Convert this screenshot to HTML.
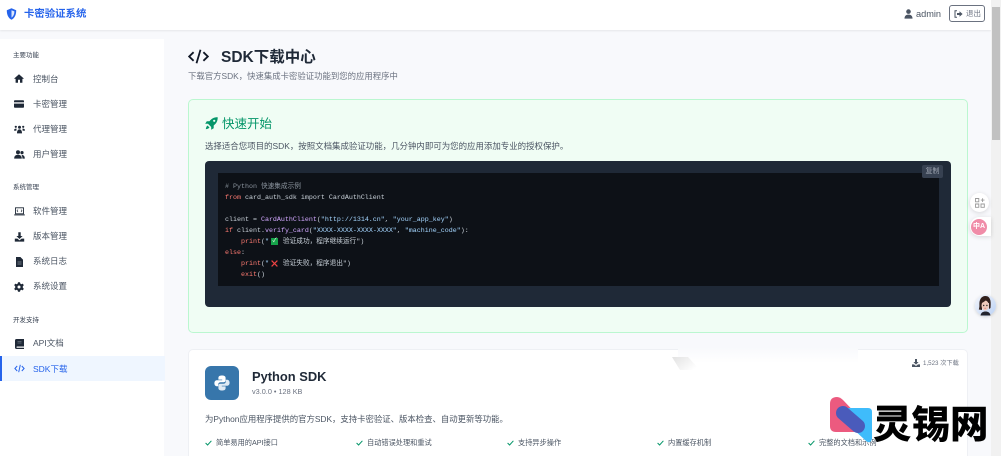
<!DOCTYPE html>
<html lang="zh"><head><meta charset="utf-8"><title>SDK下载中心</title>
<style>
*{box-sizing:border-box}
html,body{margin:0;padding:0;width:1001px;height:456px;overflow:hidden}
body{background:#f8f9fc;font-family:"Liberation Sans","Noto Sans CJK SC",sans-serif;color:#374151}
#page{position:absolute;left:0;top:0;width:1001px;height:456px;overflow:hidden;background:#f8f9fc;filter:blur(.3px)}
.a{position:absolute;white-space:nowrap}
svg{position:absolute;display:block}
.nav{position:absolute;left:33px;font-size:8.5px;line-height:12px;color:#4b5563;white-space:nowrap}
.sec{position:absolute;left:13px;font-size:6.5px;line-height:10px;color:#374151;white-space:nowrap}
.code{position:absolute;left:225px;font-family:"Liberation Mono","Noto Sans CJK SC",monospace;font-size:6.67px;line-height:11px;color:#c9d1d9;white-space:pre}
.r{color:#ff7b72}.p{color:#d2a8ff}.b{color:#a5d6ff}.c{color:#8b949e}
.f{position:absolute;top:437px;font-size:7.2px;line-height:12px;color:#4b5563;white-space:nowrap}
</style></head><body><div id="page">

<div class="a" style="left:0;top:0;width:991px;height:30px;background:#fff;box-shadow:0 1px 2px rgba(0,0,0,.08)"></div>
<svg style="left:6px;top:8px" width="11" height="12" viewBox="0 0 11 12"><path d="M5.5.3 10.2 2.2C10.2 6.5 9 9.8 5.5 11.7 2 9.8.8 6.5.8 2.2Z" fill="#2563eb"/><path d="M5.5 2.2V9.6C7.4 8.4 8.3 6.4 8.4 3.4Z" fill="#dbe7fd"/></svg>
<div class="a" style="left:24px;top:8px;font-size:10.4px;line-height:14px;font-weight:700;color:#2563eb">卡密验证系统</div>
<svg style="left:904px;top:9px" width="9" height="10" viewBox="0 0 9 10"><circle cx="4.5" cy="2.6" r="2.3" fill="#4b5563"/><path d="M.5 9.6C.5 6.8 2 5.6 4.5 5.6S8.5 6.8 8.5 9.6Z" fill="#4b5563"/></svg>
<div class="a" style="left:916px;top:7px;font-size:9.2px;line-height:14px;color:#4b5563">admin</div>
<div class="a" style="left:949px;top:5px;width:36px;height:17px;border:1px solid #6b7280;border-radius:3px;background:#fff"></div>
<svg style="left:954px;top:10px" width="9" height="8" viewBox="0 0 9 8"><path d="M3 .7H1V7.3H3" fill="none" stroke="#4b5563"/><path d="M3 3H5.5V1.2L8.6 4 5.5 6.8V5H3Z" fill="#4b5563"/></svg>
<div class="a" style="left:966px;top:8px;font-size:7.5px;line-height:11px;color:#6b7280">退出</div>

<div class="a" style="left:0;top:39px;width:164px;height:417px;background:#fff"></div>
<div class="sec" style="top:51px">主要功能</div>
<div class="sec" style="top:183px">系统管理</div>
<div class="sec" style="top:316px">开发支持</div>

<svg style="left:14px;top:74px" width="10" height="9" viewBox="0 0 10 9"><path d="M5 .3 9.8 4.5 9 5 8.4 4.6V8.7H6V5.8H4V8.7H1.6V4.6L1 5 .2 4.5Z" fill="#1f2937"/></svg>
<div class="nav" style="top:73px">控制台</div>
<svg style="left:14px;top:100px" width="10" height="8" viewBox="0 0 10 8"><rect y=".3" width="10" height="7.4" rx=".8" fill="#1f2937"/><rect y="2.3" width="10" height="1.3" fill="#fff"/></svg>
<div class="nav" style="top:98px">卡密管理</div>
<svg style="left:14px;top:125px" width="11" height="9" viewBox="0 0 11 9"><circle cx="5.5" cy="2.2" r="1.5" fill="#1f2937"/><circle cx="1.8" cy="1.8" r="1.1" fill="#1f2937"/><circle cx="9.2" cy="1.8" r="1.1" fill="#1f2937"/><path d="M3 8.4C3 5.6 4 4.4 5.5 4.4S8 5.6 8 8.4ZM0 5.6C0 4 1 3.4 2.6 3.7L2.3 5.8ZM11 5.6C11 4 10 3.4 8.4 3.7L8.7 5.8Z" fill="#1f2937"/></svg>
<div class="nav" style="top:123px">代理管理</div>
<svg style="left:14px;top:150px" width="11" height="9" viewBox="0 0 11 9"><circle cx="4" cy="2.2" r="2" fill="#1f2937"/><circle cx="8" cy="2.6" r="1.6" fill="#1f2937"/><path d="M.2 8.6C.2 5.8 1.8 4.8 4 4.8S7.8 5.8 7.8 8.6ZM8.4 8.6H10.8C10.8 6 9.5 4.9 7.4 4.9 8.2 5.9 8.4 7.2 8.4 8.6Z" fill="#1f2937"/></svg>
<div class="nav" style="top:148px">用户管理</div>

<svg style="left:14px;top:207px" width="11" height="9" viewBox="0 0 11 9"><rect x="1.5" y=".8" width="8" height="6" fill="none" stroke="#1f2937" stroke-width=".9"/><path d="M.2 7.4H10.8V8.4H.2Z" fill="#1f2937"/><path d="M4 2.6 3 3.8 4 5M7 2.6 8 3.8 7 5" fill="none" stroke="#1f2937" stroke-width=".6"/></svg>
<div class="nav" style="top:205px">软件管理</div>
<svg style="left:14px;top:232px" width="11" height="10" viewBox="0 0 11 10"><path d="M4.3.3H6.7V4H8.6L5.5 7 2.4 4H4.3ZM.8 6.6H3.4L5.5 8.4 7.6 6.6H10.2V9.6H.8Z" fill="#1f2937"/></svg>
<div class="nav" style="top:230px">版本管理</div>
<svg style="left:16px;top:257px" width="7" height="10" viewBox="0 0 7 10"><path d="M0 0H4.4L7 2.6V10H0Z" fill="#1f2937"/><path d="M1.5 5H5.5M1.5 7H5.5" stroke="#8d95a1" stroke-width=".7"/></svg>
<div class="nav" style="top:255px">系统日志</div>
<svg style="left:14px;top:282px" width="10" height="10" viewBox="0 0 10 10"><path d="M4 .2H6L6.3 1.6 7.5 2.2 8.8 1.6 9.8 3.3 8.8 4.3V5.7L9.8 6.7 8.8 8.4 7.5 7.8 6.3 8.4 6 9.8H4L3.7 8.4 2.5 7.8 1.2 8.4.2 6.7 1.2 5.7V4.3L.2 3.3 1.2 1.6 2.5 2.2 3.7 1.6Z" fill="#1f2937"/><circle cx="5" cy="5" r="1.5" fill="#fff"/></svg>
<div class="nav" style="top:280px">系统设置</div>

<svg style="left:15px;top:339px" width="9" height="10" viewBox="0 0 9 10"><path d="M1.5 0H9V7.5H2C1.3 7.5 1.3 8.8 2 8.8H9V10H1.5C.6 10 0 9.4 0 8.5V1.5C0 .6.6 0 1.5 0Z" fill="#1f2937"/><path d="M2.5 2.5H6.5M2.5 4H6.5" stroke="#8d95a1" stroke-width=".5"/></svg>
<div class="nav" style="top:337px">API文档</div>
<div class="a" style="left:0;top:356px;width:165px;height:25px;background:#eff6ff;border-left:2px solid #2563eb"></div>
<svg style="left:14px;top:364px" width="11" height="9" viewBox="0 0 11 9"><path d="M3.2 2 .9 4.5 3.2 7M7.8 2 10.1 4.5 7.8 7M6.3.8 4.7 8.2" fill="none" stroke="#2563eb" stroke-width="1"/></svg>
<div class="nav" style="top:363px;color:#2563eb">SDK下载</div>

<svg style="left:188px;top:49px" width="21" height="15" viewBox="0 0 21 15"><path d="M5.6 3.2 1.2 7.5 5.6 11.8M15.4 3.2 19.8 7.5 15.4 11.8M12.5.8 8.5 14.2" fill="none" stroke="#111827" stroke-width="1.8"/></svg>
<div class="a" style="left:221px;top:48px;font-size:15.5px;line-height:20px;font-weight:700;color:#1f2937">SDK下载中心</div>
<div class="a" style="left:188px;top:70px;font-size:8.4px;line-height:12px;color:#6b7280">下载官方SDK，快速集成卡密验证功能到您的应用程序中</div>

<div class="a" style="left:188px;top:99px;width:780px;height:234px;background:#f0fdf4;border:1px solid #bbf7d0;border-radius:5px"></div>
<svg style="left:205px;top:117px" width="13" height="13" viewBox="0 0 13 13"><path d="M12.7.3C9.3.2 6.6 1.5 4.5 4.3H1.8L.2 6.8H3L6.2 10V12.8L8.7 11.2V8.5C11.5 6.4 12.8 3.7 12.7.3Z" fill="#059669"/><circle cx="9.2" cy="3.8" r="1.1" fill="#f0fdf4"/><path d="M2.5 8.5C1.3 9.4 1 11 .8 12.2 2 12 3.6 11.7 4.5 10.5Z" fill="#059669"/></svg>
<div class="a" style="left:222px;top:116px;font-size:12.5px;line-height:17px;color:#059669">快速开始</div>
<div class="a" style="left:205px;top:140px;font-size:8.45px;line-height:12px;color:#4b5563">选择适合您项目的SDK，按照文档集成验证功能，几分钟内即可为您的应用添加专业的授权保护。</div>

<div class="a" style="left:205px;top:161px;width:746px;height:146px;background:#1f2937;border-radius:4px"></div>
<div class="a" style="left:218px;top:173px;width:721px;height:113px;background:#0d1117"></div>
<div class="a" style="left:922px;top:165px;width:21px;height:13px;background:#374151;border-radius:2px;color:#9ca3af;font-size:7px;line-height:13px;text-align:center">复制</div>
<div class="code" style="top:182px"><span class="c"># Python 快速集成示例</span></div>
<div class="code" style="top:193px"><span class="r">from</span> card_auth_sdk import CardAuthClient</div>
<div class="code" style="top:215px">client = <span class="p">CardAuthClient</span>(<span class="b">"http://1314.cn"</span>, <span class="b">"your_app_key"</span>)</div>
<div class="code" style="top:226px"><span class="r">if</span> client.<span class="p">verify_card</span>(<span class="b">"XXXX-XXXX-XXXX-XXXX"</span>, <span class="b">"machine_code"</span>):</div>
<div class="code" style="top:237px">    <span class="r">print</span>(<span class="b">"</span></div>
<div class="a" style="left:271px;top:238px;width:7px;height:7px;background:#16a34a;color:#fff;font-size:6px;line-height:7px;text-align:center">✓</div>
<div class="code" style="top:237px;left:283px">验证成功，程序继续运行")</div>
<div class="code" style="top:248px"><span class="r">else</span>:</div>
<div class="code" style="top:259px">    <span class="r">print</span>(<span class="b">"</span></div>
<svg style="left:271px;top:260px" width="7" height="7" viewBox="0 0 7 7"><path d="M.6.6 6.4 6.4M6.4.6.6 6.4" stroke="#ef4444" stroke-width="1.2"/></svg>
<div class="code" style="top:259px;left:283px">验证失败，程序退出")</div>
<div class="code" style="top:270px">    <span class="r">exit</span>()</div>

<div class="a" style="left:188px;top:349px;width:780px;height:107px;background:#fff;border:1px solid #eef0f4;border-bottom:0;border-radius:5px 5px 0 0"></div>
<div class="a" style="left:205px;top:366px;width:34px;height:34px;background:#3776ab;border-radius:6px"></div>
<svg style="left:214px;top:375px" width="16" height="16" viewBox="0 0 16 16"><path d="M8 .5C5 .5 4.4 1.6 4.4 3V4.6H8.2V5.2H3C1.4 5.2.4 6.3.4 8.2S1.4 11.2 3 11.2H4.2V9.5C4.2 8 5.3 7.2 6.6 7.2H9.8C11 7.2 11.6 6.4 11.6 5.3V3C11.6 1.4 10.4.5 8 .5Z" fill="#fff"/><path d="M8 15.5C11 15.5 11.6 14.4 11.6 13V11.4H7.8V10.8H13C14.6 10.8 15.6 9.7 15.6 7.8S14.6 4.8 13 4.8H11.8V6.5C11.8 8 10.7 8.8 9.4 8.8H6.2C5 8.8 4.4 9.6 4.4 10.7V13C4.4 14.6 5.6 15.5 8 15.5Z" fill="#dfeaf4"/></svg>
<div class="a" style="left:252px;top:368px;font-size:12.9px;line-height:17px;font-weight:700;color:#1f2937">Python SDK</div>
<div class="a" style="left:252px;top:386px;font-size:7.3px;line-height:11px;color:#6b7280">v3.0.0 • 128 KB</div>
<svg style="left:912px;top:359px" width="8" height="8" viewBox="0 0 8 8"><path d="M3 0H5V3H6.6L4 5.6 1.4 3H3ZM0 5.4H2L4 7 6 5.4H8V8H0Z" fill="#4b5563"/></svg>
<div class="a" style="left:923px;top:358px;font-size:6.2px;line-height:11px;color:#6b7280">1,523 次下载</div>
<div class="a" style="left:205px;top:413px;font-size:8.4px;line-height:12px;color:#4b5563">为Python应用程序提供的官方SDK，支持卡密验证、版本检查、自动更新等功能。</div>

<svg style="left:205px;top:440px" width="7" height="6" viewBox="0 0 7 6"><path d="M.6 3 2.6 5 6.4.8" fill="none" stroke="#059669" stroke-width="1"/></svg>
<div class="f" style="left:216px">简单易用的API接口</div>
<svg style="left:356px;top:440px" width="7" height="6" viewBox="0 0 7 6"><path d="M.6 3 2.6 5 6.4.8" fill="none" stroke="#059669" stroke-width="1"/></svg>
<div class="f" style="left:367px">自动错误处理和重试</div>
<svg style="left:507px;top:440px" width="7" height="6" viewBox="0 0 7 6"><path d="M.6 3 2.6 5 6.4.8" fill="none" stroke="#059669" stroke-width="1"/></svg>
<div class="f" style="left:518px">支持异步操作</div>
<svg style="left:657px;top:440px" width="7" height="6" viewBox="0 0 7 6"><path d="M.6 3 2.6 5 6.4.8" fill="none" stroke="#059669" stroke-width="1"/></svg>
<div class="f" style="left:668px">内置缓存机制</div>
<svg style="left:808px;top:440px" width="7" height="6" viewBox="0 0 7 6"><path d="M.6 3 2.6 5 6.4.8" fill="none" stroke="#059669" stroke-width="1"/></svg>
<div class="f" style="left:819px">完整的文档和示例</div>

<!-- smear over card top -->
<div class="a" style="left:678px;top:347px;width:180px;height:26px;background:linear-gradient(#f8f9fc,#fff 60%);border-radius:0 0 8px 8px"></div>
<svg style="left:670px;top:354px" width="32" height="20" viewBox="0 0 32 20"><defs><linearGradient id="g" x1="0" y1="0" x2="1" y2=".6"><stop offset="0" stop-color="#e2e2e2"/><stop offset="1" stop-color="#fff"/></linearGradient></defs><path d="M2 3H18L30 16 10 16Z" fill="url(#g)"/></svg>

<!-- scrollbar -->
<div class="a" style="left:991px;top:0;width:10px;height:456px;background:#f1f1f1"></div>
<div class="a" style="left:992px;top:7px;width:8px;height:133px;background:#c1c1c1"></div>

<!-- side widgets -->
<div class="a" style="left:970px;top:193px;width:19px;height:19px;border-radius:50%;background:#fff;box-shadow:0 1px 5px rgba(0,0,0,.14)"></div>
<svg style="left:975px;top:198px" width="10" height="10" viewBox="0 0 10 10"><path d="M.5.5H3.8V3.8H.5ZM.5 6H3.8V9.3H.5ZM6 6H9.3V9.3H6ZM7.6.3V4M5.8 2.1H9.5" fill="none" stroke="#9a9a9a" stroke-width=".9"/></svg>
<div class="a" style="left:970px;top:217px;width:21px;height:19px;border-radius:10px 0 0 10px;background:#fff;box-shadow:0 1px 5px rgba(0,0,0,.14)"></div>
<div class="a" style="left:971px;top:219px;width:16px;height:16px;border-radius:50%;background:#f08ca8;color:#fff;font-size:7px;line-height:16px;text-align:center;font-weight:700">中A</div>
<div class="a" style="left:975px;top:295px;width:21px;height:21px;border-radius:50%;background:linear-gradient(135deg,#f3f5fb,#bcd2f4);box-shadow:0 1px 3px rgba(0,0,0,.15)"></div>
<svg style="left:977px;top:295px" width="17" height="21" viewBox="0 0 17 21"><path d="M8.5 1C4 1 2.2 5 2.4 9.5 2.6 12 2 13.6 1.8 14.5L5 15V8L12 8V14L13.5 13C13.6 11 14 8 13.4 5.5 12.8 2.6 11 1 8.5 1Z" fill="#33211c"/><ellipse cx="8.2" cy="10.5" rx="3.7" ry="5" fill="#efc9ba"/><path d="M4.4 8C6.5 7.5 9 5.5 9.5 4 10.5 6 11.5 7 12 8.5 12.5 4 10 2 7.5 2.5 5.5 3 4.2 5 4.4 8Z" fill="#33211c"/><path d="M3.5 20.5C4 17.5 6 16.5 8.5 16.5S13 17.5 13.5 20.5Z" fill="#23242c"/><circle cx="6.7" cy="10.5" r=".7" fill="#222"/><circle cx="9.9" cy="10.5" r=".7" fill="#222"/><path d="M7.3 13.2H9.1" stroke="#cf6d6d" stroke-width=".7"/></svg>

<!-- watermark -->
<svg style="left:830px;top:396px" width="44" height="50" viewBox="0 0 44 50"><path d="M0 8Q0 1 7 1 10 1 13 4L32 24 24 36H6Q0 36 0 30Z" fill="#ec5a7f"/><path d="M10 12H38Q42 12 42 16V43Q40 49 35 44L8 19Q5 13 10 12Z" fill="#3fbcfb"/><path d="M13 17 28 30" stroke="#4a5bbb" stroke-width="14" stroke-linecap="round"/></svg>
<div class="a" style="left:873px;top:398px;font-size:38.5px;line-height:48px;font-weight:900;color:#000;font-family:'Noto Sans CJK SC',sans-serif">灵锡网</div>
</div></body></html>
